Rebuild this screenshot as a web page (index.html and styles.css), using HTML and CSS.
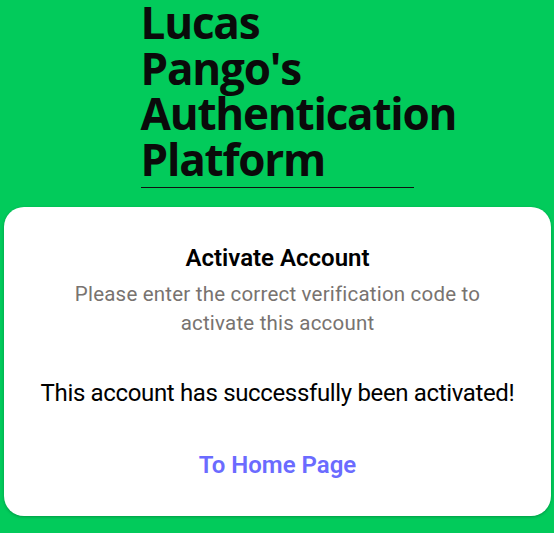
FILE: index.html
```html
<!DOCTYPE html>
<html>
<head>
<meta charset="utf-8">
<link rel="stylesheet" href="styles.css">
</head>
<body>
<header class="brand">
  <h1 class="brand-title">Lucas Pango's Authentication Platform</h1>
</header>
<main class="card">
  <h2 class="card-title">Activate Account</h2>
  <p class="card-sub">Please enter the correct verification code to activate this account</p>
  <p class="card-msg">This account has successfully been activated!</p>
  <a class="card-link" href="#">To Home Page</a>
</main>
</body>
</html>
```
FILE: styles.css
```css
html, body {
  margin: 0;
  padding: 0;
}
body {
  background: #02cb5b;
  font-family: Roboto, "Open Sans", sans-serif;
  height: 533px;
  overflow: hidden;
}
.brand {
  width: 273px;
  margin: 0 auto;
  padding: 0 0 5px;
  border-bottom: 1px solid #111;
}
.brand-title {
  margin: 0;
  font-family: "Open Sans", Roboto, sans-serif;
  font-size: 44px;
  line-height: 45.5px;
  font-weight: 700;
  letter-spacing: -1.2px;
  color: #0a0a0a;
}
.card {
  margin: 19px 3px 0 4px;
  background: #fff;
  border-radius: 20px;
  box-shadow: 0 1px 3px rgba(0,0,0,0.25);
  height: 309px;
  display: flex;
  flex-direction: column;
  align-items: center;
  text-align: center;
  padding-top: 35px;
  box-sizing: border-box;
}
.card-title {
  margin: 0;
  font-size: 24px;
  font-weight: 600;
  color: #000;
  line-height: 32px;
}
.card-sub {
  margin: 6px 0 0;
  font-size: 20.5px;
  letter-spacing: 0.2px;
  line-height: 29px;
  color: #787370;
  max-width: 430px;
}
.card-msg {
  margin: 39px 0 0;
  font-size: 24px;
  letter-spacing: -0.35px;
  line-height: 32px;
  color: #000;
}
.card-link {
  margin-top: 40px;
  font-size: 24px;
  font-weight: 600;
  color: #6b6bff;
  text-decoration: none;
  line-height: 32px;
}
```
